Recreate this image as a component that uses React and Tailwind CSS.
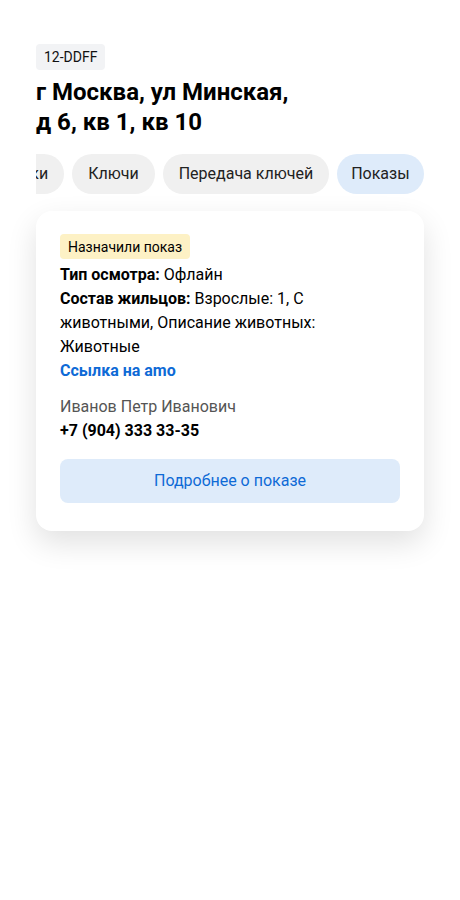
import React, { useEffect, useRef } from 'react';

const TABS = ['Договор', 'Заявки', 'Ключи', 'Передача ключей', 'Показы'];

const App = () => {
  const tabsRef = useRef(null);

  useEffect(() => {
    // active tab is the last one, keep it in view
    const el = tabsRef.current;
    if (el) el.scrollLeft = el.scrollWidth;
  }, []);

  return (
    <div className="min-h-[900px] bg-white px-9 pt-11 text-[#000] font-['Roboto',sans-serif]">
      <div className="inline-flex h-[26px] items-center rounded bg-[#f2f3f5] px-2 text-sm leading-none text-[#111]">
        12-DDFF
      </div>

      <h1 className="mt-[7px] text-2xl font-bold leading-[30px]">
        г Москва, ул Минская,
        <br />
        д 6, кв 1, кв 10
      </h1>

      <div
        ref={tabsRef}
        className="mt-[17px] flex gap-2 overflow-x-auto [scrollbar-width:none]"
      >
        {TABS.map((tab) => (
          <div
            key={tab}
            className={`flex h-10 shrink-0 items-center rounded-full whitespace-nowrap text-base text-[#222] ${
              tab === 'Показы' ? 'bg-[#deebfa] px-[14px]' : 'bg-[#f0f0f0] px-4'
            }`}
          >
            {tab}
          </div>
        ))}
      </div>

      <div className="mt-[17px] rounded-2xl bg-white px-6 pt-[23px] pb-7 shadow-[0_12px_30px_rgba(0,0,0,0.12)]">
        <div className="inline-flex h-[25px] items-center rounded bg-[#fdf1c5] px-2 text-sm leading-none">
          Назначили показ
        </div>

        <div className="mt-1 max-w-[320px] text-base leading-6">
          <p>
            <span className="font-bold">Тип осмотра:</span> Офлайн
          </p>
          <p>
            <span className="font-bold">Состав жильцов:</span> Взрослые: 1, С животными, Описание животных: Животные
          </p>
          <a href="#" className="block font-bold text-[#0e6ad6]">
            Ссылка на amo
          </a>
        </div>

        <div className="mt-3 text-base leading-6">
          <p className="text-[#555]">Иванов Петр Иванович</p>
          <p className="font-bold">+7 (904) 333 33-35</p>
        </div>

        <button className="mt-4 flex h-11 w-full items-center justify-center rounded-lg bg-[#deebfa] text-base text-[#0e6ad6]">
          Подробнее о показе
        </button>
      </div>
    </div>
  );
};

export default App;
